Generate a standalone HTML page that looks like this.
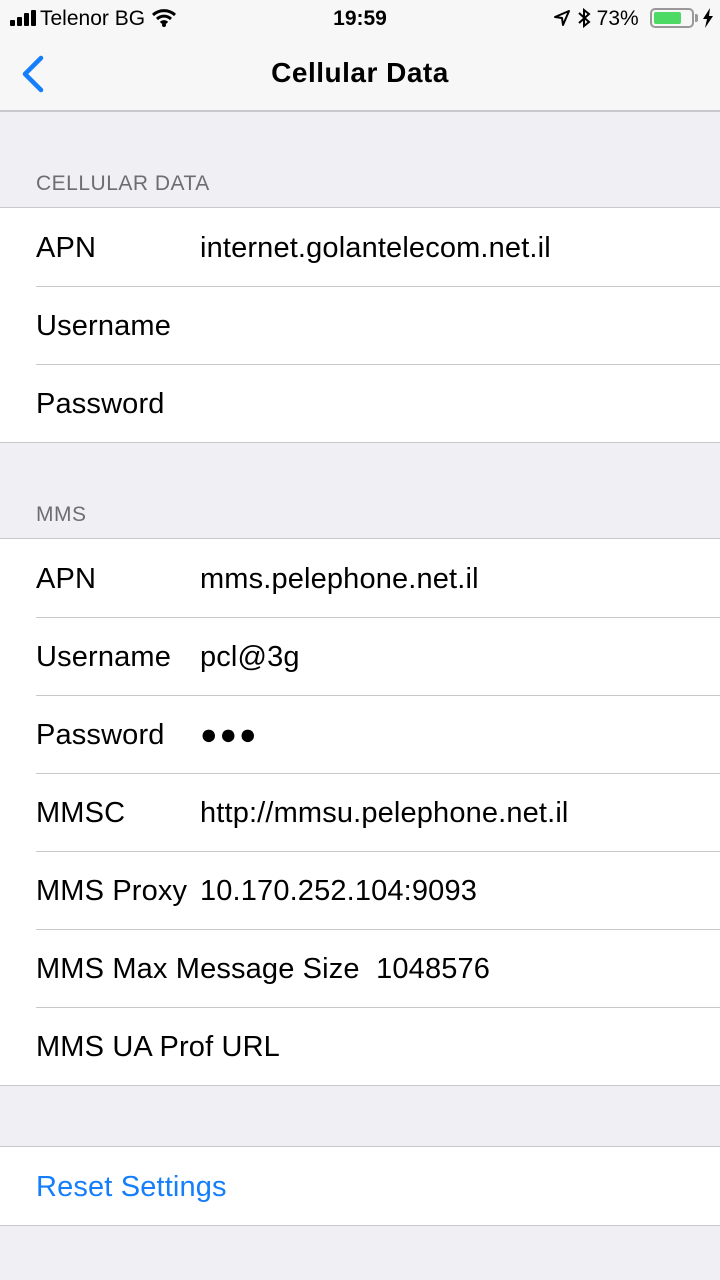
<!DOCTYPE html>
<html><head><meta charset="utf-8"><style>
*{margin:0;padding:0;box-sizing:border-box}
body{width:720px;height:1280px;background:#efeff4;font-family:"Liberation Sans",sans-serif;position:relative;overflow:hidden}
.nav{position:absolute;left:0;top:0;width:720px;height:112px;background:#f7f7f7;border-bottom:2px solid #c8c7cc}
.sb{position:absolute;top:6px;font-size:20px;color:#000}
.title{position:absolute;top:57px;width:720px;text-align:center;font-size:28px;font-weight:bold;letter-spacing:0.5px}
.hdr{position:absolute;left:36px;font-size:21px;color:#6d6d72;letter-spacing:0.5px}
.grp{position:absolute;left:0;width:720px;background:#fff;border-top:1px solid #c8c7cc;border-bottom:1px solid #c8c7cc}
.row{height:78px;position:relative;font-size:29px;color:#000;letter-spacing:0.15px}
.row+.row:before{content:"";position:absolute;left:36px;right:0;top:0;border-top:1px solid #c8c7cc}
.l{position:absolute;left:36px;top:24px}
.v{position:absolute;left:200px;top:24px}
</style></head><body>
<div class="nav">
 <div class="sb" style="left:10px;top:7px;font-size:21px">
  <svg width="30" height="16" style="vertical-align:-1px"><rect x="0" y="10" width="5" height="6" rx="1"/><rect x="7" y="7" width="5" height="9" rx="1"/><rect x="14" y="3" width="5" height="13" rx="1"/><rect x="21" y="0" width="5" height="16" rx="1"/></svg>Telenor BG
  <svg width="26" height="18" style="vertical-align:-2px" viewBox="0 0 26 18"><path d="M2 6a16 16 0 0 1 22 0M6 10a10 10 0 0 1 14 0M10 14a4 4 0 0 1 6 0" stroke="#000" stroke-width="3" fill="none"/><circle cx="13" cy="16" r="2"/></svg>
 </div>
 <div class="sb" style="left:0;width:720px;text-align:center;font-weight:bold;top:7px;font-size:21px">19:59</div>
 <div class="sb" style="left:553px;top:7px;font-size:21px">
  <svg width="18" height="18" viewBox="0 0 18 18" style="vertical-align:-2px"><path d="M16 2L2 8l7 1 1 7z" stroke="#000" stroke-width="2" fill="none" stroke-linejoin="round"/></svg>
  <svg width="14" height="20" viewBox="0 0 14 20" style="vertical-align:-3px"><path d="M2 5l10 9-5 4V2l5 4-10 9" stroke="#000" stroke-width="2" fill="none"/></svg>
  73%
 </div>
 <div style="position:absolute;left:650px;top:8px;width:44px;height:20px;border:2px solid #999;border-radius:5px;padding:2px"><div style="width:27px;height:12px;background:#4cd964;border-radius:2px"></div></div>
 <div style="position:absolute;left:695px;top:14px;width:3px;height:8px;background:#999;border-radius:0 2px 2px 0"></div>
 <svg style="position:absolute;left:702px;top:8px" width="12" height="20" viewBox="0 0 12 20"><path d="M8 0L1 11h4l-2 9 8-12H7z"/></svg>
 <svg style="position:absolute;left:20px;top:55px" width="26" height="38" viewBox="0 0 26 38"><path d="M21 3L5 19l16 16" stroke="#157efb" stroke-width="4.5" fill="none" stroke-linecap="round" stroke-linejoin="round"/></svg>
 <div class="title">Cellular Data</div>
</div>
<div class="hdr" style="top:172px">CELLULAR DATA</div>
<div class="grp" style="top:207px">
 <div class="row"><span class="l">APN</span><span class="v">internet.golantelecom.net.il</span></div>
 <div class="row"><span class="l">Username</span></div>
 <div class="row"><span class="l">Password</span></div>
</div>
<div class="hdr" style="top:503px">MMS</div>
<div class="grp" style="top:538px">
 <div class="row"><span class="l">APN</span><span class="v">mms.pelephone.net.il</span></div>
 <div class="row"><span class="l">Username</span><span class="v">pcl@3g</span></div>
 <div class="row"><span class="l">Password</span><span class="v" style="letter-spacing:2px">●●●</span></div>
 <div class="row"><span class="l">MMSC</span><span class="v">http://mmsu.pelephone.net.il</span></div>
 <div class="row"><span class="l">MMS Proxy</span><span class="v">10.170.252.104:9093</span></div>
 <div class="row"><span class="l">MMS Max Message Size&nbsp; 1048576</span></div>
 <div class="row"><span class="l">MMS UA Prof URL</span></div>
</div>
<div class="grp" style="top:1146px">
 <div class="row"><span class="l" style="color:#157efb">Reset Settings</span></div>
</div>
</body></html>
